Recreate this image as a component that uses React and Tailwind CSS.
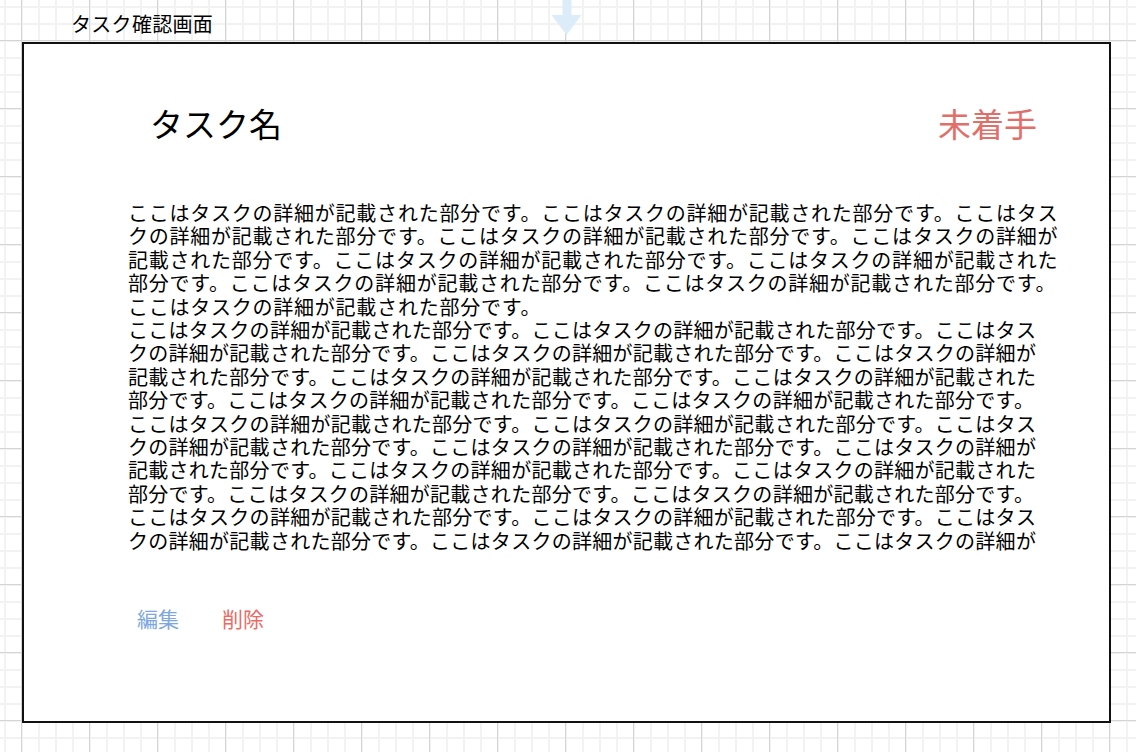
import React from 'react'

const S = 'ここはタスクの詳細が記載された部分です。'

// line breaks as they appear in the screen
const L1 = S + S + 'ここはタス'
const L2 = 'クの詳細が記載された部分です。' + S + 'ここはタスクの詳細が'
const L3 = '記載された部分です。' + S + 'ここはタスクの詳細が記載された'
const L4 = '部分です。' + S + S

const para1 = [L1, L2, L3, L4, S]
const para2 = [L1, L2, L3, L4, L1, L2, L3, L4, L1, L2]

function DragArrow() {
  return (
    <svg className="absolute left-[551px] top-0" width="31" height="36" viewBox="0 0 31 36">
      <rect x="11.5" y="0" width="9" height="15" fill="#dcedf9" />
      <polygon points="0.5,15 30.5,15 15.5,35" fill="#dcedf9" />
    </svg>
  )
}

export default function App() {
  return (
    <div
      className="relative w-[1136px] h-[752px] overflow-hidden bg-white text-black font-['Noto_Sans_CJK_JP','Noto_Sans',sans-serif] [background-image:linear-gradient(to_right,#d4d4d4_1px,transparent_1px),linear-gradient(to_bottom,#d4d4d4_1px,transparent_1px),linear-gradient(to_right,#f2f2f2_2px,transparent_2px),linear-gradient(to_bottom,#f2f2f2_2px,transparent_2px)] [background-size:68px_68px,68px_68px,17px_17px,17px_17px] [background-position:21px_40px,21px_40px,4px_6px,4px_6px]"
    >
      <DragArrow />

      <div className="h-[42px] pl-[71px] pt-[12px] text-[20px] leading-[24px] tracking-[0.3px]">タスク確認画面</div>

      <div className="ml-[22px] w-[1089px] h-[681px] border-2 border-[#111] bg-white">
        <div className="mt-[59px] h-[40px] flex items-center justify-between pl-[126px] pr-[72px] text-[33px] leading-[40px]">
          <span>タスク名</span>
          <span className="text-[#e06e69]">未着手</span>
        </div>

        <div className="mt-[58px] pl-[104px] text-[20px] leading-[23.4px] whitespace-nowrap">
          <div className="tracking-[0.76px]">
            {para1.map((l, i) => (
              <div key={i}>{l}</div>
            ))}
          </div>
          <div className="tracking-[0.27px]">
            {para2.map((l, i) => (
              <div key={i}>{l}</div>
            ))}
          </div>
        </div>

        <div className="mt-[54px] flex gap-[43px] pl-[113px] text-[21px] leading-[24px]">
          <button className="text-[#7ea6e0]">編集</button>
          <button className="text-[#ea6b66]">削除</button>
        </div>
      </div>
    </div>
  )
}
